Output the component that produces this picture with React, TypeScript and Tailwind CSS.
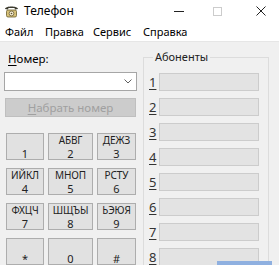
import React from "react";

const keys: { top: string; digit: string }[] = [
  { top: "\u00a0", digit: "1" },
  { top: "АБВГ", digit: "2" },
  { top: "ДЕЖЗ", digit: "3" },
  { top: "ИЙКЛ", digit: "4" },
  { top: "МНОП", digit: "5" },
  { top: "РСТУ", digit: "6" },
  { top: "ФХЦЧ", digit: "7" },
  { top: "ШЩЪЫ", digit: "8" },
  { top: "ЬЭЮЯ", digit: "9" },
  { top: "\u00a0", digit: "*" },
  { top: "\u00a0", digit: "0" },
  { top: "\u00a0", digit: "#" },
];

function PhoneIcon() {
  return (
    <svg width="15" height="14" viewBox="0 0 15 14">
      <path d="M1 5 C1 1.5 14 1.5 14 5 L11 5.5 L10.5 4 L4.5 4 L4 5.5 Z" fill="#3b3a2e" />
      <rect x="2.5" y="6" width="10" height="7" rx="1.5" fill="#d8c27a" stroke="#6b5d2c" strokeWidth="0.8" />
      <circle cx="7.5" cy="9.5" r="2.4" fill="#f3ead0" stroke="#5a4f2a" strokeWidth="0.7" />
      <circle cx="7.5" cy="9.5" r="0.8" fill="#5a4f2a" />
    </svg>
  );
}

export default function App() {
  return (
    <div className="relative h-[265px] w-[279px] overflow-hidden bg-[#f0f0f0] font-['Noto_Sans',sans-serif] text-[12px] leading-none text-black">
      {/* title bar */}
      <div className="flex h-[22px] items-center bg-white">
        <div className="ml-[4px] flex h-[14px] w-[15px] items-center">
          <PhoneIcon />
        </div>
        <span className="ml-[5px] text-[12px] leading-[16px]">Телефон</span>
        <div className="ml-auto flex h-full items-center pr-[13px]">
          <div className="h-px w-[10px] bg-[#222]" />
          <div className="ml-[29px] h-[9px] w-[9px] border border-[#cccccc]" />
          <svg className="ml-[34px]" width="10" height="10" viewBox="0 0 10 10">
            <path d="M0.5 0.5 L9.5 9.5 M9.5 0.5 L0.5 9.5" stroke="#222" strokeWidth="1" />
          </svg>
        </div>
      </div>

      {/* menu bar */}
      <div className="flex h-[20px] items-center border-b border-[#e6e6e6] bg-white text-[11px] leading-[16px]">
        <span className="ml-[5px] w-[40px] shrink-0">Файл</span>
        <span className="w-[48px] shrink-0">Правка</span>
        <span className="w-[50px] shrink-0">Сервис</span>
        <span className="shrink-0">Справка</span>
      </div>

      <div className="flex">
        {/* left column */}
        <div className="w-[137px] shrink-0 pt-[9px]">
          <div className="ml-[8px] text-[11.5px] leading-[16px]">
            <span className="underline underline-offset-2">Н</span>омер:
          </div>
          <div className="ml-[4px] mt-[5px] flex h-[19px] w-[133px] items-center justify-end border border-[#a6a6a6] bg-white pr-[4px]">
            <svg width="8" height="5" viewBox="0 0 8 5">
              <path d="M0.5 0.5 L4 4 L7.5 0.5" fill="none" stroke="#606060" strokeWidth="1" />
            </svg>
          </div>
          <div className="ml-[5px] mt-[7px] flex h-[19px] w-[131px] items-center justify-center border border-[#bfbfbf] bg-[#cccccc] text-[11.5px] leading-[16px] text-[#a0a0a0]">
            <span>
              <span className="underline underline-offset-2">Н</span>абрать номер
            </span>
          </div>
          <div className="ml-[6px] mt-[16px] grid grid-cols-[38px_45px_39px] gap-x-[4px] gap-y-[8px]">
            {keys.map((k) => (
              <div
                key={k.digit}
                className="flex h-[27px] flex-col items-center justify-center border border-[#adadad] bg-[#e1e1e1] leading-[13px] text-[#222]"
              >
                <span className="text-[10px] tracking-[-0.1px]">{k.top}</span>
                <span className="text-[11px]">{k.digit}</span>
              </div>
            ))}
          </div>
        </div>

        {/* subscribers group */}
        <fieldset className="ml-[6px] mt-[7px] h-[240px] w-[126px] shrink-0 border border-[#dcdcdc] pl-[5px]">
          <legend className="ml-[4px] px-[2px] text-[11px] leading-[16px] text-[#222]">Абоненты</legend>
          <div className="mt-[8px] flex flex-col gap-[7px]">
            {[1, 2, 3, 4, 5, 6, 7, 8].map((n) => (
              <div key={n} className="flex h-[18px] items-center">
                <span className="w-[10px] text-[13px] leading-[16px] text-[#333] underline underline-offset-2">
                  {n}
                </span>
                <div className="h-[18px] w-[100px] border border-[#cccccc] bg-[#e3e3e3]" />
              </div>
            ))}
          </div>
        </fieldset>
      </div>

      <div className="absolute left-[217px] top-[261px] h-[6px] w-[55px] bg-[#8fb0e0]" />
    </div>
  );
}
